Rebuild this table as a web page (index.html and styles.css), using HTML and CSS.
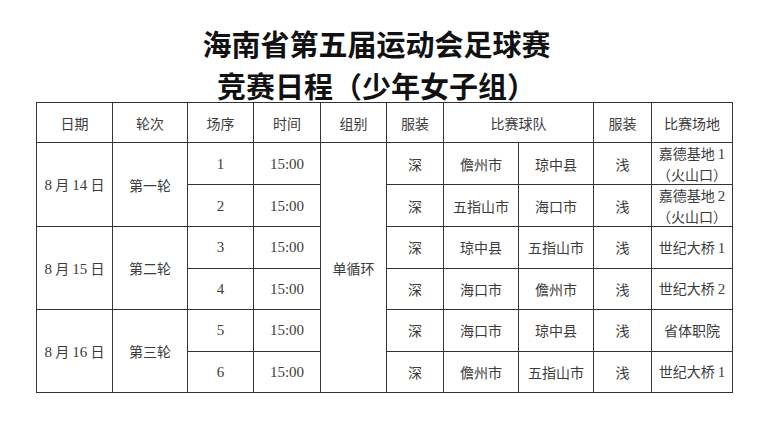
FILE: index.html
```html
<!DOCTYPE html>
<html lang="zh-CN">
<head>
<meta charset="utf-8">
<title>海南省第五届运动会足球赛 竞赛日程</title>
<link rel="stylesheet" href="styles.css">
</head>
<body>
<div class="page">
  <header class="title">
    <div class="title-line first">海南省第五届运动会足球赛</div>
    <div class="title-line second">竞赛日程（少年女子组）</div>
  </header>
  <table class="schedule">
    <colgroup>
      <col class="c-date"><col class="c-round"><col class="c-no"><col class="c-time"><col class="c-group">
      <col class="c-kit"><col class="c-team"><col class="c-team"><col class="c-kit2"><col class="c-venue">
    </colgroup>
    <thead>
      <tr>
        <th>日期</th><th>轮次</th><th>场序</th><th>时间</th><th>组别</th>
        <th>服装</th><th colspan="2">比赛球队</th><th>服装</th><th>比赛场地</th>
      </tr>
    </thead>
    <tbody>
      <tr>
        <td rowspan="2"><span class="num">8</span> 月 <span class="num">14</span> 日</td>
        <td rowspan="2">第一轮</td>
        <td class="num">1</td><td class="num">15:00</td>
        <td rowspan="6">单循环</td>
        <td>深</td><td>儋州市</td><td>琼中县</td><td>浅</td>
        <td class="two">嘉德基地 <span class="num">1</span><br>（火山口）</td>
      </tr>
      <tr>
        <td class="num">2</td><td class="num">15:00</td>
        <td>深</td><td>五指山市</td><td>海口市</td><td>浅</td>
        <td class="two">嘉德基地 <span class="num">2</span><br>（火山口）</td>
      </tr>
      <tr>
        <td rowspan="2"><span class="num">8</span> 月 <span class="num">15</span> 日</td>
        <td rowspan="2">第二轮</td>
        <td class="num">3</td><td class="num">15:00</td>
        <td>深</td><td>琼中县</td><td>五指山市</td><td>浅</td>
        <td>世纪大桥 <span class="num">1</span></td>
      </tr>
      <tr>
        <td class="num">4</td><td class="num">15:00</td>
        <td>深</td><td>海口市</td><td>儋州市</td><td>浅</td>
        <td>世纪大桥 <span class="num">2</span></td>
      </tr>
      <tr>
        <td rowspan="2"><span class="num">8</span> 月 <span class="num">16</span> 日</td>
        <td rowspan="2">第三轮</td>
        <td class="num">5</td><td class="num">15:00</td>
        <td>深</td><td>海口市</td><td>琼中县</td><td>浅</td>
        <td>省体职院</td>
      </tr>
      <tr>
        <td class="num">6</td><td class="num">15:00</td>
        <td>深</td><td>儋州市</td><td>五指山市</td><td>浅</td>
        <td>世纪大桥 <span class="num">1</span></td>
      </tr>
    </tbody>
  </table>
</div>
</body>
</html>
```

FILE: styles.css
```css
html, body {
  margin: 0;
  padding: 0;
  background: #ffffff;
}

.page {
  width: 761px;
  height: 431px;
  overflow: hidden;
  display: flex;
  flex-direction: column;
}

.title {
  height: 102px;
  display: flex;
  flex-direction: column;
  align-items: center;
  padding-right: 8px;
  box-sizing: border-box;
  font-family: "Noto Sans CJK SC", "Noto Sans", sans-serif;
  font-weight: 700;
  font-size: 29px;
  color: #111111;
}

.title-line {
  line-height: 30px;
  white-space: nowrap;
}

.title-line.first {
  margin-top: 28px;
}

.title-line.second {
  margin-top: 12px;
}

.schedule {
  margin-left: 36px;
  width: 697px;
  table-layout: fixed;
  border-collapse: collapse;
  font-family: "Noto Sans CJK SC", "Liberation Serif", serif;
  font-size: 14px;
  color: #3c3c3c;
}

.c-date { width: 76px; }
.c-round { width: 75px; }
.c-no { width: 66px; }
.c-time { width: 67px; }
.c-group { width: 66px; }
.c-kit { width: 57px; }
.c-team { width: 75px; }
.c-kit2 { width: 58px; }
.c-venue { width: 81px; }

.schedule th,
.schedule td {
  border: 1px solid #333333;
  text-align: center;
  vertical-align: middle;
  padding: 0;
  font-weight: 400;
  line-height: 20px;
  white-space: nowrap;
}

.schedule thead th {
  height: 39px;
}

.schedule tbody td {
  height: 40.5px;
}

.num {
  font-family: "Liberation Serif", serif;
  font-size: 15px;
}

.two {
  line-height: 19px;
}
```
